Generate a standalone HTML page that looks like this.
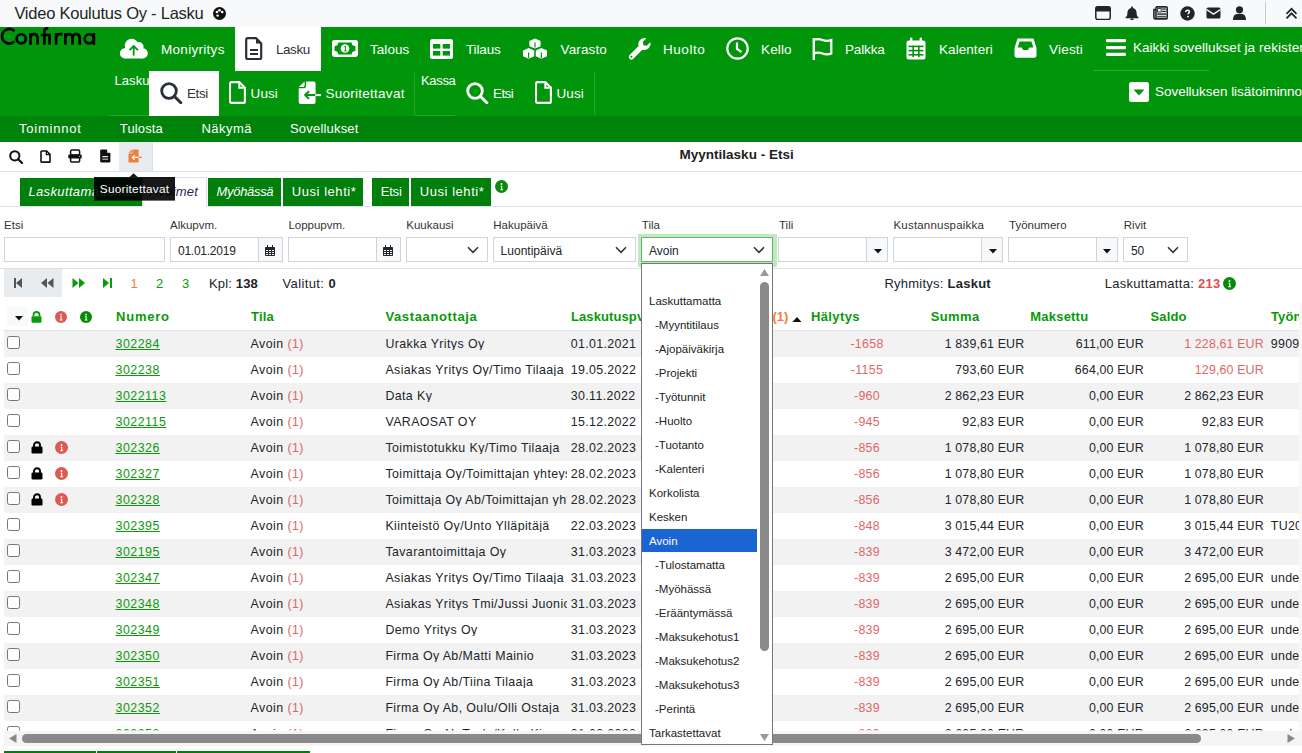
<!DOCTYPE html>
<html><head><meta charset="utf-8"><title>Lasku</title><style>
*{margin:0;padding:0;box-sizing:content-box}
html,body{width:1302px;height:753px;overflow:hidden;background:#fff}
body{position:relative;font-family:"Liberation Sans",sans-serif}
.a{position:absolute;display:block}
.t{position:absolute;white-space:nowrap;line-height:1}
</style></head><body>
<div class="a" style="left:0px;top:0px;width:1302px;height:27px;background:#f8f9fa;"></div>
<span class="t" id="t1" style="left:14.40px;top:5.43px;font-size:16.5px;color:#212529;letter-spacing:-0.236px;">Video Koulutus Oy - Lasku</span>
<svg class="a" style="left:213px;top:7px;" width="13" height="13" viewBox="0 0 13 13"><circle cx="6.5" cy="6.5" r="6.5" fill="#111"/><circle cx="4" cy="5" r="1.3" fill="#fff"/><circle cx="6.5" cy="3.2" r="1.3" fill="#fff"/><circle cx="9.2" cy="5" r="1.3" fill="#fff"/><circle cx="4.6" cy="8.6" r="1.2" fill="#fff"/></svg>
<svg class="a" style="left:1095px;top:6px;" width="16" height="14" viewBox="0 0 16 14"><rect x="0.8" y="0.8" width="14.4" height="12.6" rx="1.8" fill="none" stroke="#212529" stroke-width="1.5"/><rect x="0.8" y="0.8" width="14.4" height="4.6" rx="1" fill="#212529"/></svg>
<svg class="a" style="left:1125px;top:6px;" width="14" height="14" viewBox="0 0 14 14"><path d="M7 0.5c.7 0 1 .5 1 1v.6c2.4.5 3.6 2.5 3.6 4.8 0 2.6.9 3.6 1.9 4.6v.8H.5v-.8c1-1 1.9-2 1.9-4.6 0-2.3 1.2-4.3 3.6-4.8v-.6c0-.5.3-1 1-1z" fill="#212529"/><path d="M5.2 12.6h3.6a1.8 1.8 0 0 1-3.6 0z" fill="#212529"/></svg>
<svg class="a" style="left:1153px;top:6px;" width="15" height="14" viewBox="0 0 15 14"><path d="M3 0.9H13.2C13.8 0.9 14.2 1.3 14.2 1.9V11.9C14.2 12.5 13.8 12.9 13.2 12.9H2.2C1.4 12.9 0.9 12.4 0.9 11.6V3.6H3M3 0.9V12.4" fill="none" stroke="#212529" stroke-width="1.6"/><rect x="4.6" y="2.6" width="3.6" height="3.4" fill="#fff" stroke="#212529" stroke-width="0.9"/><rect x="9.2" y="2.4" width="3.6" height="1.3" fill="#212529"/><rect x="9.2" y="4.8" width="3.6" height="1.3" fill="#212529"/><rect x="4.2" y="7.2" width="8.8" height="2" fill="#555"/><rect x="4.2" y="10.2" width="8.8" height="1.2" fill="#212529"/></svg>
<svg class="a" style="left:1180px;top:6px;" width="15" height="15" viewBox="0 0 15 15"><circle cx="7.5" cy="7.5" r="7.2" fill="#212529"/><path d="M5.7 6C5.7 4.8 6.5 4.2 7.6 4.2 8.7 4.2 9.4 4.8 9.4 5.8 9.4 7 8 7.1 8 8.3" fill="none" stroke="#fff" stroke-width="1.5"/><circle cx="8" cy="10.6" r="0.95" fill="#fff"/></svg>
<svg class="a" style="left:1206px;top:7px;" width="15" height="12" viewBox="0 0 15 12"><rect x="0.5" y="0.5" width="14" height="11" rx="1.5" fill="#212529"/><path d="M0.5 2.5 7.5 7.2 14.5 2.5" fill="none" stroke="#fff" stroke-width="1.4"/></svg>
<svg class="a" style="left:1233px;top:6px;" width="13" height="14" viewBox="0 0 13 14"><circle cx="6.5" cy="3.8" r="3.6" fill="#212529"/><path d="M0 14c0-4 2-6 4-6h5c2 0 4 2 4 6z" fill="#212529"/></svg>
<div class="a" style="left:1265px;top:2px;width:1px;height:22px;background:#c8c8c8;"></div>
<svg class="a" style="left:1285px;top:7px;" width="13" height="12" viewBox="0 0 13 12"><path d="M1.5 6.8 6.5 1.8 11.5 6.8M1.5 11.3 6.5 6.3 11.5 11.3" fill="none" stroke="#212529" stroke-width="1.7"/></svg>
<div class="a" style="left:0px;top:27px;width:1302px;height:89px;background:#00950a;"></div>
<svg class="a" style="left:0px;top:26px;" width="100" height="20" viewBox="0 0 100 20"><g fill="none" stroke="#000" stroke-width="2.7" transform="translate(0,-26)"><path d="M14.46 31.09A7.3 7.3 0 1 0 14.46 41.41"/><circle cx="21.25" cy="38.85" r="4.6"/><path d="M30.45 44.8V33M30.45 38.5C30.45 35.2 32 34.15 34.1 34.15C36.3 34.15 37.55 35.3 37.55 38.5V44.8"/><path d="M44.3 44.8V31.6C44.3 29.2 45.5 28.45 47.3 28.45H48.3M40.8 35H50.9M49.6 35V44.8"/><path d="M56.1 44.8V33M56.1 38.6C56.1 35.3 57.6 34.15 60 34.15H62.6"/><path d="M65.45 44.8V33M65.45 38.3C65.45 35.2 66.8 34.15 69 34.15C71.2 34.15 72.6 35.2 72.6 38.3V44.8M72.6 38.3C72.6 35.2 74 34.15 76.2 34.15C78.4 34.15 79.75 35.2 79.75 38.3V44.8"/><circle cx="89.3" cy="38.85" r="4.6"/><path d="M93.85 33V44.8"/></g></svg>
<svg class="a" style="left:120px;top:38px;" width="28" height="21" viewBox="0 0 28 21"><g fill="#fff"><circle cx="5" cy="15.4" r="5.1"/><circle cx="11.6" cy="7.6" r="6.8"/><circle cx="18.6" cy="9" r="5"/><circle cx="22.7" cy="15.4" r="5.1"/><rect x="5" y="9" width="17.7" height="11.5"/></g><path d="M13.7 17.4V8.2M9.5 12.2 13.7 8 17.9 12.2" fill="none" stroke="#00950a" stroke-width="1.8"/></svg>
<span class="t" id="t2" style="left:161.00px;top:42.87px;font-size:13.5px;color:#ffffff;letter-spacing:0.293px;">Moniyritys</span>
<div class="a" style="left:235px;top:27px;width:86px;height:44px;background:#ffffff;"></div>
<svg class="a" style="left:245px;top:37px;" width="18" height="23" viewBox="0 0 18 23"><path d="M2.8 1.2h8.2l5.2 5.2v14.2c0 .9-.7 1.6-1.6 1.6H2.8c-.9 0-1.6-.7-1.6-1.6V2.8c0-.9.7-1.6 1.6-1.6z" fill="none" stroke="#2a2f3a" stroke-width="2.2"/><path d="M11 1.2V6.4h5.2z" fill="#2a2f3a"/><rect x="5" y="12" width="8" height="2" fill="#2a2f3a"/><rect x="5" y="16" width="8" height="2" fill="#2a2f3a"/></svg>
<span class="t" id="t3" style="left:276.00px;top:42.87px;font-size:13.5px;color:#333;letter-spacing:-0.458px;">Lasku</span>
<svg class="a" style="left:332px;top:40px;" width="26" height="17" viewBox="0 0 26 17"><rect x="0" y="0" width="26" height="17" rx="2.4" fill="#fff"/><path d="M6.3 2.6H19.7A3.6 3.6 0 0 0 23.4 6.1V10.9A3.6 3.6 0 0 0 19.7 14.4H6.3A3.6 3.6 0 0 0 2.6 10.9V6.1A3.6 3.6 0 0 0 6.3 2.6z" fill="#00950a"/><circle cx="13" cy="8.5" r="4.3" fill="#fff"/><path d="M12.3 6.7 13.4 6.1V10.9M12.2 10.9H14.6" fill="none" stroke="#00950a" stroke-width="1"/></svg>
<span class="t" id="t4" style="left:370.00px;top:42.87px;font-size:13.5px;color:#ffffff;letter-spacing:0.054px;">Talous</span>
<svg class="a" style="left:430px;top:39px;" width="23" height="20" viewBox="0 0 23 20"><rect x="0" y="0" width="23" height="20" rx="2.5" fill="#fff"/><rect x="3" y="5" width="7.3" height="4.6" fill="#00950a"/><rect x="12.7" y="5" width="7.3" height="4.6" fill="#00950a"/><rect x="3" y="12" width="7.3" height="4.6" fill="#00950a"/><rect x="12.7" y="12" width="7.3" height="4.6" fill="#00950a"/></svg>
<span class="t" id="t5" style="left:466.00px;top:42.87px;font-size:13.5px;color:#ffffff;letter-spacing:-0.143px;">Tilaus</span>
<svg class="a" style="left:522px;top:38px;" width="26" height="22" viewBox="0 0 26 22"><path d="M13 0.5l5.6 2.4v5.4l-5.6 2.3-5.6-2.3V2.9z" fill="#fff"/><path d="M6.6 10l5.6 2.4v5.9l-5.6 2.5L1 18.3v-5.9z" fill="#fff"/><path d="M19.4 10l5.6 2.4v5.9l-5.6 2.5-5.6-2.5v-5.9z" fill="#fff"/><path d="M13 4.5v5M6.6 14.5v5.5M19.4 14.5v5.5" stroke="#00950a" stroke-width="1.2"/></svg>
<span class="t" id="t6" style="left:560.60px;top:42.87px;font-size:13.5px;color:#ffffff;letter-spacing:0.111px;">Varasto</span>
<svg class="a" style="left:628px;top:37px;" width="24" height="23" viewBox="0 0 24 23"><path d="M22.3 5.2l-3.6 3.6-3.3-.6-.6-3.3 3.6-3.6A6.2 6.2 0 0 0 10.6 9l-9 9a2.6 2.6 0 0 0 3.7 3.7l9-9a6.2 6.2 0 0 0 8-7.5z" fill="#fff"/><circle cx="3.4" cy="19.8" r="1" fill="#00950a"/></svg>
<span class="t" id="t7" style="left:663.00px;top:42.87px;font-size:13.5px;color:#ffffff;letter-spacing:0.554px;">Huolto</span>
<svg class="a" style="left:726px;top:37px;" width="23" height="23" viewBox="0 0 23 23"><circle cx="11.5" cy="11.5" r="10.2" fill="none" stroke="#fff" stroke-width="2.2"/><path d="M11 5.5v6.5l4.5 3" fill="none" stroke="#fff" stroke-width="2.2"/></svg>
<span class="t" id="t8" style="left:761.00px;top:42.87px;font-size:13.5px;color:#ffffff;letter-spacing:0.142px;">Kello</span>
<svg class="a" style="left:812px;top:37px;" width="21" height="23" viewBox="0 0 21 23"><path d="M1.8 1v22" stroke="#fff" stroke-width="2.4"/><path d="M2 3c3-1.5 6-1 8.5 0s5 1.5 8.8 0v13.5c-3.8 1.5-6.3 1-8.8 0S5 15 2 16.5" fill="none" stroke="#fff" stroke-width="2.2"/></svg>
<span class="t" id="t9" style="left:845.00px;top:42.87px;font-size:13.5px;color:#ffffff;letter-spacing:-0.146px;">Palkka</span>
<svg class="a" style="left:906px;top:37px;" width="20" height="23" viewBox="0 0 20 23"><rect x="0.5" y="3.5" width="19" height="19" rx="2.2" fill="#fff"/><rect x="4" y="0.5" width="2.4" height="5" rx="1" fill="#fff"/><rect x="13.6" y="0.5" width="2.4" height="5" rx="1" fill="#fff"/><g fill="#00950a"><rect x="2.5" y="8.6" width="15" height="1.6"/><rect x="2.5" y="12.8" width="15" height="1.6"/><rect x="2.5" y="17" width="15" height="1.6"/><rect x="6.4" y="8.6" width="1.6" height="11.5"/><rect x="12" y="8.6" width="1.6" height="11.5"/></g></svg>
<span class="t" id="t10" style="left:939.00px;top:42.87px;font-size:13.5px;color:#ffffff;letter-spacing:0.063px;">Kalenteri</span>
<svg class="a" style="left:1014px;top:38px;" width="23" height="20" viewBox="0 0 23 20"><path d="M3.5 0.5h16l3 9.5v7.5c0 1.2-1 2.2-2.2 2.2H2.7C1.5 19.7.5 18.7.5 17.5V10z" fill="#fff"/><path d="M5.6 3.4h11.8l2 6h-4.2l-1.3 2.7H9.1L7.8 9.4H3.6z" fill="#00950a"/></svg>
<span class="t" id="t11" style="left:1049.00px;top:42.87px;font-size:13.5px;color:#ffffff;letter-spacing:0.204px;">Viesti</span>
<svg class="a" style="left:1106px;top:39px;" width="20" height="17" viewBox="0 0 20 17"><rect x="0" y="0" width="20" height="3.2" rx="1.2" fill="#fff"/><rect x="0" y="7" width="20" height="3.2" rx="1.2" fill="#fff"/><rect x="0" y="13.8" width="20" height="3.2" rx="1.2" fill="#fff"/></svg>
<span class="t" id="t12" style="left:1132.90px;top:40.57px;font-size:13.5px;color:#ffffff;letter-spacing:0.072px;">Kaikki sovellukset ja rekisterit</span>
<div class="a" style="left:1093px;top:70px;width:116px;height:1px;background:rgba(255,255,255,0.18);"></div>
<span class="t" id="t13" style="left:114.60px;top:73.80px;font-size:13px;color:#ffffff;letter-spacing:0.024px;">Lasku</span>
<div class="a" style="left:109px;top:115px;width:40px;height:1px;background:rgba(255,255,255,0.15);"></div>
<div class="a" style="left:149px;top:71px;width:70px;height:45px;background:#ffffff;"></div>
<svg class="a" style="left:160px;top:82px;" width="23" height="22" viewBox="0 0 23 22"><circle cx="9" cy="9" r="7.3" fill="none" stroke="#2a2f3a" stroke-width="2.8"/><path d="M14.3 14.3l6.5 6.5" stroke="#2a2f3a" stroke-width="3" stroke-linecap="round"/></svg>
<span class="t" id="t14" style="left:187.00px;top:86.97px;font-size:13.5px;color:#333;letter-spacing:-0.439px;">Etsi</span>
<svg class="a" style="left:229px;top:81px;" width="17" height="23" viewBox="0 0 17 23"><path d="M2.5 1.1h7.8l5.6 5.6v13.7c0 .8-.7 1.5-1.5 1.5H2.5c-.8 0-1.5-.7-1.5-1.5V2.6c0-.8.7-1.5 1.5-1.5z" fill="none" stroke="#fff" stroke-width="2.1"/><path d="M10.3 1.1v5.6h5.6" fill="none" stroke="#fff" stroke-width="2"/></svg>
<span class="t" id="t15" style="left:250.60px;top:86.97px;font-size:13.5px;color:#ffffff;letter-spacing:0.061px;">Uusi</span>
<svg class="a" style="left:298px;top:81px;" width="24" height="23" viewBox="0 0 24 23"><path d="M8 0.5H15.6C16.7 0.5 17.6 1.4 17.6 2.5V20.9C17.6 22 16.7 22.9 15.6 22.9H2.7C1.6 22.9 0.7 22 0.7 20.9V7.2H6C7.1 7.2 8 6.3 8 5.2z" fill="#fff"/><path d="M0.8 5.9 6.6 0.5V4.4C6.6 5.2 6 5.9 5.1 5.9z" fill="#fff"/><path d="M17.6 14.1H7.2M11 10.3 7.2 14.1 11 17.9" fill="none" stroke="#00950a" stroke-width="2"/><path d="M17.4 14.1H23" stroke="#fff" stroke-width="2"/></svg>
<span class="t" id="t16" style="left:325.50px;top:86.97px;font-size:13.5px;color:#ffffff;letter-spacing:0.259px;">Suoritettavat</span>
<div class="a" style="left:414px;top:71px;width:1px;height:44px;background:rgba(255,255,255,0.15);"></div>
<div class="a" style="left:415px;top:115px;width:40px;height:1px;background:rgba(255,255,255,0.15);"></div>
<span class="t" id="t17" style="left:421.00px;top:74.00px;font-size:13px;color:#ffffff;letter-spacing:-0.335px;">Kassa</span>
<svg class="a" style="left:466px;top:82px;" width="23" height="22" viewBox="0 0 23 22"><circle cx="9" cy="9" r="7.3" fill="none" stroke="#fff" stroke-width="2.8"/><path d="M14.3 14.3l6.5 6.5" stroke="#fff" stroke-width="3" stroke-linecap="round"/></svg>
<span class="t" id="t18" style="left:493.00px;top:86.97px;font-size:13.5px;color:#ffffff;letter-spacing:-0.572px;">Etsi</span>
<svg class="a" style="left:535px;top:81px;" width="18" height="23" viewBox="0 0 18 23"><path d="M2.5 1.1h7.8l5.6 5.6v13.7c0 .8-.7 1.5-1.5 1.5H2.5c-.8 0-1.5-.7-1.5-1.5V2.6c0-.8.7-1.5 1.5-1.5z" fill="none" stroke="#fff" stroke-width="2.1"/><path d="M10.3 1.1v5.6h5.6" fill="none" stroke="#fff" stroke-width="2"/></svg>
<span class="t" id="t19" style="left:556.50px;top:86.97px;font-size:13.5px;color:#ffffff;letter-spacing:0.061px;">Uusi</span>
<div class="a" style="left:594px;top:71px;width:1px;height:44px;background:rgba(255,255,255,0.15);"></div>
<svg class="a" style="left:1129px;top:82px;" width="20" height="20" viewBox="0 0 20 20"><rect x="0" y="0" width="20" height="20" rx="2.5" fill="#fff"/><path d="M4.5 7.5h11L10 13.5z" fill="#00950a"/></svg>
<span class="t" id="t20" style="left:1155.00px;top:84.57px;font-size:13.5px;color:#ffffff;letter-spacing:-0.033px;">Sovelluksen lisätoiminnot</span>
<div class="a" style="left:0px;top:116px;width:1302px;height:26px;background:#00830a;"></div>
<span class="t" id="t21" style="left:19.00px;top:122.00px;font-size:13px;color:#ffffff;letter-spacing:0.770px;">Toiminnot</span>
<span class="t" id="t22" style="left:119.80px;top:122.00px;font-size:13px;color:#ffffff;letter-spacing:0.141px;">Tulosta</span>
<span class="t" id="t23" style="left:201.50px;top:122.00px;font-size:13px;color:#ffffff;letter-spacing:0.482px;">Näkymä</span>
<span class="t" id="t24" style="left:290.00px;top:122.00px;font-size:13px;color:#ffffff;letter-spacing:0.192px;">Sovellukset</span>
<div class="a" style="left:0px;top:171px;width:1302px;height:1px;background:#dee2e6;"></div>
<svg class="a" style="left:9px;top:150px;" width="14" height="14" viewBox="0 0 14 14"><circle cx="5.8" cy="5.8" r="4.6" fill="none" stroke="#111" stroke-width="2"/><path d="M9.2 9.2l3.8 3.8" stroke="#111" stroke-width="2.2" stroke-linecap="round"/></svg>
<svg class="a" style="left:40px;top:150px;" width="11" height="13" viewBox="0 0 11 13"><path d="M1.8 1h4.8l3.4 3.4v7c0 .4-.3.7-.7.7H1.8c-.4 0-.8-.3-.8-.7V1.7c0-.4.4-.7.8-.7z" fill="none" stroke="#111" stroke-width="1.6"/><path d="M6.4 1v3.6h3.6" fill="none" stroke="#111" stroke-width="1.3"/></svg>
<svg class="a" style="left:68px;top:149px;" width="14" height="14" viewBox="0 0 14 14"><rect x="2.6" y="1.1" width="9" height="5" rx="1.3" fill="none" stroke="#111" stroke-width="1.5"/><rect x="0.3" y="5.4" width="13.4" height="4.2" rx="1" fill="#111"/><circle cx="11.6" cy="7.4" r="0.6" fill="#9c6"/><rect x="2.6" y="8.8" width="9" height="4.3" rx="1" fill="#fff" stroke="#111" stroke-width="1.5"/></svg>
<svg class="a" style="left:100px;top:149px;" width="11" height="14" viewBox="0 0 11 14"><path d="M1.3 0.6H6.6L10.4 4.4V12.3C10.4 12.9 10 13.4 9.4 13.4H1.3C0.7 13.4 0.2 12.9 0.2 12.3V1.7C0.2 1.1 0.7 0.6 1.3 0.6z" fill="#111"/><path d="M7.2 0.9V3.8H10.1z" fill="#fff"/><rect x="2.3" y="7.1" width="5.8" height="1.1" fill="#fff"/><rect x="2.3" y="9.6" width="5.8" height="1.1" fill="#ccc"/></svg>
<div class="a" style="left:119px;top:142px;width:34px;height:29px;background:#e9ecef;"></div>
<div class="a" style="left:152px;top:142px;width:1px;height:29px;background:#dcdfe3;"></div>
<svg class="a" style="left:128px;top:149px;" width="14" height="14" viewBox="0 0 14 14"><path d="M4.5 0.5H9.6C10.2 0.5 10.6 0.9 10.6 1.5V12.5C10.6 13.1 10.2 13.5 9.6 13.5H1.5C0.9 13.5 0.5 13.1 0.5 12.5V4.6H3.4C4 4.6 4.5 4.1 4.5 3.5z" fill="#ef7d3c"/><path d="M0.6 3.8 3.9 0.6V3C3.9 3.5 3.5 3.8 3 3.8z" fill="#ef7d3c"/><path d="M10.6 8.4H4.3M6.6 6.1 4.3 8.4 6.6 10.7" fill="none" stroke="#fff" stroke-width="1.3"/><path d="M10.5 8.4H13.8" stroke="#ef7d3c" stroke-width="1.3"/></svg>
<span class="t" id="t25" style="left:679.40px;top:147.97px;font-size:13.5px;color:#222;font-weight:700;letter-spacing:0.021px;">Myyntilasku - Etsi</span>
<div class="a" style="left:0px;top:206px;width:1302px;height:1px;background:#dee2e6;"></div>
<div class="a" style="left:20px;top:178px;width:122px;height:28px;background:#007f0c;"></div>
<span class="t" id="t26" style="left:28.40px;top:184.50px;font-size:13px;color:#ffffff;font-style:italic;letter-spacing:0.365px;">Laskuttamattomat</span>
<div class="a" style="left:142px;top:177px;width:63px;height:29px;background:#fff;border:1px solid #dee2e6;border-bottom:none;"></div>
<span class="t" id="t27" style="left:150.00px;top:184.50px;font-size:13px;color:#1a2a5a;font-style:italic;letter-spacing:0.178px;">Avoimet</span>
<div class="a" style="left:208px;top:178px;width:73px;height:28px;background:#007f0c;"></div>
<span class="t" id="t28" style="left:216.50px;top:184.50px;font-size:13px;color:#ffffff;font-style:italic;letter-spacing:-0.307px;">Myöhässä</span>
<div class="a" style="left:283px;top:178px;width:80px;height:28px;background:#007f0c;"></div>
<span class="t" id="t29" style="left:291.80px;top:184.50px;font-size:13px;color:#ffffff;letter-spacing:0.547px;">Uusi lehti*</span>
<div class="a" style="left:372px;top:178px;width:37px;height:28px;background:#007f0c;"></div>
<span class="t" id="t30" style="left:380.70px;top:184.50px;font-size:13px;color:#ffffff;letter-spacing:-0.191px;">Etsi</span>
<div class="a" style="left:411px;top:178px;width:80px;height:28px;background:#007f0c;"></div>
<span class="t" id="t31" style="left:419.80px;top:184.50px;font-size:13px;color:#ffffff;letter-spacing:0.547px;">Uusi lehti*</span>
<svg class="a" style="left:495px;top:179.5px;" width="13" height="13" viewBox="0 0 13 13"><circle cx="6.5" cy="6.5" r="6.5" fill="#0a8a0a"/><circle cx="6.5" cy="4" r="0.95" fill="#fff"/><path d="M5.5 5.7h1.8v3.5h0.8v1H5.2v-1h0.9V6.6h-0.6z" fill="#fff"/></svg>
<svg class="a" style="left:94px;top:172px;" width="81" height="29" viewBox="0 0 81 29"><path d="M35.5 5 39.6 1.2 43.7 5z" fill="#000" fill-opacity="0.9"/><rect x="0" y="5" width="81" height="23.6" fill="#000" fill-opacity="0.9"/></svg>
<span class="t" id="t32" style="left:99.80px;top:183.81px;font-size:11.8px;color:#fff;letter-spacing:0.247px;">Suoritettavat</span>
<span class="t" id="t33" style="left:4.00px;top:219.57px;font-size:11.5px;color:#333;letter-spacing:0.076px;">Etsi</span>
<span class="t" style="left:170.00px;top:219.57px;font-size:11.5px;color:#333;">Alkupvm.</span>
<span class="t" style="left:288.40px;top:219.57px;font-size:11.5px;color:#333;">Loppupvm.</span>
<span class="t" style="left:406.30px;top:219.57px;font-size:11.5px;color:#333;">Kuukausi</span>
<span class="t" style="left:493.30px;top:219.57px;font-size:11.5px;color:#333;">Hakupäivä</span>
<span class="t" style="left:641.80px;top:219.57px;font-size:11.5px;color:#333;">Tila</span>
<span class="t" style="left:779.00px;top:219.57px;font-size:11.5px;color:#333;">Tili</span>
<span class="t" id="t34" style="left:893.50px;top:219.57px;font-size:11.5px;color:#333;letter-spacing:0.193px;">Kustannuspaikka</span>
<span class="t" style="left:1009.00px;top:219.57px;font-size:11.5px;color:#333;">Työnumero</span>
<span class="t" style="left:1123.80px;top:219.57px;font-size:11.5px;color:#333;">Rivit</span>
<div class="a" style="left:4px;top:237px;width:159px;height:23px;border:1px solid #ced4da;background:#fff;"></div>
<div class="a" style="left:170px;top:237px;width:111px;height:23px;border:1px solid #ced4da;background:#fff;"></div>
<div class="a" style="left:258px;top:238px;width:24px;height:23px;background:#f8f9fa;"></div>
<div class="a" style="left:258px;top:238px;width:1px;height:23px;background:#ced4da;"></div>
<span class="t" id="t35" style="left:178.00px;top:245.04px;font-size:12px;color:#212529;letter-spacing:-0.251px;">01.01.2019</span>
<svg class="a" style="left:265px;top:245px;" width="10" height="11" viewBox="0 0 10 11"><rect x="0" y="2" width="10" height="9" rx="0.8" fill="#212529"/><rect x="2" y="0" width="1" height="3" fill="#212529"/><rect x="7" y="0" width="1" height="3" fill="#212529"/><rect x="1" y="5" width="2" height="1" fill="#f8f9fa"/><rect x="1" y="7" width="2" height="1" fill="#f8f9fa"/><rect x="1" y="9" width="2" height="1" fill="#f8f9fa"/><rect x="4" y="5" width="2" height="1" fill="#f8f9fa"/><rect x="4" y="7" width="2" height="1" fill="#f8f9fa"/><rect x="4" y="9" width="2" height="1" fill="#f8f9fa"/><rect x="7" y="5" width="2" height="1" fill="#f8f9fa"/><rect x="7" y="7" width="2" height="1" fill="#f8f9fa"/><rect x="7" y="9" width="2" height="1" fill="#f8f9fa"/></svg>
<div class="a" style="left:288px;top:237px;width:111px;height:23px;border:1px solid #ced4da;background:#fff;"></div>
<div class="a" style="left:376px;top:238px;width:24px;height:23px;background:#f8f9fa;"></div>
<div class="a" style="left:376px;top:238px;width:1px;height:23px;background:#ced4da;"></div>
<svg class="a" style="left:383px;top:245px;" width="10" height="11" viewBox="0 0 10 11"><rect x="0" y="2" width="10" height="9" rx="0.8" fill="#212529"/><rect x="2" y="0" width="1" height="3" fill="#212529"/><rect x="7" y="0" width="1" height="3" fill="#212529"/><rect x="1" y="5" width="2" height="1" fill="#f8f9fa"/><rect x="1" y="7" width="2" height="1" fill="#f8f9fa"/><rect x="1" y="9" width="2" height="1" fill="#f8f9fa"/><rect x="4" y="5" width="2" height="1" fill="#f8f9fa"/><rect x="4" y="7" width="2" height="1" fill="#f8f9fa"/><rect x="4" y="9" width="2" height="1" fill="#f8f9fa"/><rect x="7" y="5" width="2" height="1" fill="#f8f9fa"/><rect x="7" y="7" width="2" height="1" fill="#f8f9fa"/><rect x="7" y="9" width="2" height="1" fill="#f8f9fa"/></svg>
<div class="a" style="left:406px;top:237px;width:80px;height:23px;border:1px solid #ced4da;background:#fff;"></div>
<svg class="a" style="left:466.5px;top:246px;" width="12" height="8" viewBox="0 0 12 8"><path d="M1 1.3 6 6.3 11 1.3" fill="none" stroke="#333" stroke-width="1.6"/></svg>
<div class="a" style="left:493px;top:237px;width:141px;height:23px;border:1px solid #ced4da;background:#fff;"></div>
<span class="t" id="t36" style="left:500.60px;top:245.04px;font-size:12px;color:#212529;letter-spacing:0.011px;">Luontipäivä</span>
<svg class="a" style="left:615px;top:246px;" width="12" height="8" viewBox="0 0 12 8"><path d="M1 1.3 6 6.3 11 1.3" fill="none" stroke="#333" stroke-width="1.6"/></svg>
<div class="a" style="left:637.5px;top:233.5px;width:139px;height:33px;background:#c3e6c3;"></div>
<div class="a" style="left:641px;top:237px;width:130px;height:23px;border:1px solid #62b962;background:#fff;"></div>
<span class="t" id="t37" style="left:649.00px;top:245.04px;font-size:12px;color:#212529;letter-spacing:-0.003px;">Avoin</span>
<svg class="a" style="left:752.5px;top:246px;" width="12" height="8" viewBox="0 0 12 8"><path d="M1 1.3 6 6.3 11 1.3" fill="none" stroke="#333" stroke-width="1.6"/></svg>
<div class="a" style="left:778px;top:237px;width:108px;height:23px;border:1px solid #ced4da;background:#fff;"></div>
<div class="a" style="left:866px;top:238px;width:21px;height:23px;background:#f8f9fa;"></div>
<div class="a" style="left:866px;top:238px;width:1px;height:23px;background:#ced4da;"></div>
<svg class="a" style="left:873.5px;top:249px;" width="8" height="5" viewBox="0 0 8 5"><path d="M0 0h8L4 4.6z" fill="#111"/></svg>
<div class="a" style="left:893px;top:237px;width:108px;height:23px;border:1px solid #ced4da;background:#fff;"></div>
<div class="a" style="left:981px;top:238px;width:21px;height:23px;background:#f8f9fa;"></div>
<div class="a" style="left:981px;top:238px;width:1px;height:23px;background:#ced4da;"></div>
<svg class="a" style="left:988.5px;top:249px;" width="8" height="5" viewBox="0 0 8 5"><path d="M0 0h8L4 4.6z" fill="#111"/></svg>
<div class="a" style="left:1008px;top:237px;width:108px;height:23px;border:1px solid #ced4da;background:#fff;"></div>
<div class="a" style="left:1096px;top:238px;width:21px;height:23px;background:#f8f9fa;"></div>
<div class="a" style="left:1096px;top:238px;width:1px;height:23px;background:#ced4da;"></div>
<svg class="a" style="left:1103px;top:249px;" width="8" height="5" viewBox="0 0 8 5"><path d="M0 0h8L4 4.6z" fill="#111"/></svg>
<div class="a" style="left:1123px;top:237px;width:63px;height:23px;border:1px solid #ced4da;background:#fff;"></div>
<span class="t" id="t38" style="left:1131.00px;top:245.04px;font-size:12px;color:#212529;letter-spacing:-0.059px;">50</span>
<svg class="a" style="left:1167px;top:246px;" width="12" height="8" viewBox="0 0 12 8"><path d="M1 1.3 6 6.3 11 1.3" fill="none" stroke="#333" stroke-width="1.6"/></svg>
<div class="a" style="left:0px;top:268px;width:1302px;height:1px;background:#dee2e6;"></div>
<div class="a" style="left:4px;top:269px;width:58px;height:28px;background:#e9ecef;"></div>
<svg class="a" style="left:14px;top:278px;" width="8" height="10" viewBox="0 0 8 10"><rect x="0" y="0" width="2" height="10" fill="#555"/><path d="M8 0v10L2 5z" fill="#555"/></svg>
<svg class="a" style="left:40px;top:278px;" width="14" height="10" viewBox="0 0 14 10"><path d="M7 0v10L1 5zM13.5 0v10l-6-5z" fill="#555"/></svg>
<svg class="a" style="left:71.5px;top:278px;" width="14" height="10" viewBox="0 0 14 10"><path d="M0.5 0v10l6-5zM7 0v10l6-5z" fill="#0a9a0a"/></svg>
<svg class="a" style="left:103px;top:278px;" width="9" height="10" viewBox="0 0 9 10"><path d="M0 0v10l6-5z" fill="#0a9a0a"/><rect x="7" y="0" width="2" height="10" fill="#0a9a0a"/></svg>
<span class="t" id="t39" style="left:130.60px;top:277.20px;font-size:13px;color:#ef7d3c;letter-spacing:-1.034px;">1</span>
<span class="t" id="t40" style="left:156.00px;top:277.20px;font-size:13px;color:#0a9a0a;letter-spacing:0.566px;">2</span>
<span class="t" id="t41" style="left:182.00px;top:277.20px;font-size:13px;color:#0a9a0a;letter-spacing:0.566px;">3</span>
<span class="t" id="t42" style="left:209.00px;top:277.20px;font-size:13px;color:#212529;letter-spacing:0.154px;">Kpl: <b>138</b></span>
<span class="t" id="t43" style="left:282.50px;top:277.20px;font-size:13px;color:#212529;letter-spacing:0.386px;">Valitut: <b>0</b></span>
<span class="t" id="t44" style="left:884.40px;top:277.20px;font-size:13px;color:#212529;letter-spacing:0.248px;">Ryhmitys: <b>Laskut</b></span>
<span class="t" id="t45" style="left:1104.70px;top:277.20px;font-size:13px;color:#212529;letter-spacing:0.294px;">Laskuttamatta: <b style="color:#d9534f">213</b></span>
<svg class="a" style="left:1223px;top:276.5px;" width="13" height="13" viewBox="0 0 13 13"><circle cx="6.5" cy="6.5" r="6.5" fill="#0a8a0a"/><circle cx="6.5" cy="4" r="0.95" fill="#fff"/><path d="M5.5 5.7h1.8v3.5h0.8v1H5.2v-1h0.9V6.6h-0.6z" fill="#fff"/></svg>
<div class="a" style="left:0;top:0;width:1302px;height:753px;clip-path:inset(303px 3px 22.5px 4px);">
<div class="a" style="left:7px;top:307px;width:21px;height:19px;background:#f8f9fa;"></div>
<svg class="a" style="left:14.6px;top:315.5px;" width="8" height="5" viewBox="0 0 8 5"><path d="M0 0h8L4 4.6z" fill="#111"/></svg>
<svg class="a" style="left:31px;top:311px;" width="11" height="12" viewBox="0 0 11 12"><path d="M2.5 5.5V4a3 3 0 0 1 6 0v1.5" fill="none" stroke="#0a9a0a" stroke-width="1.8"/><rect x="0.5" y="5.2" width="10" height="6.6" rx="1.2" fill="#0a9a0a"/></svg>
<svg class="a" style="left:55px;top:311px;" width="12" height="12" viewBox="0 0 12 12"><circle cx="6" cy="6" r="6" fill="#dc5a50"/><circle cx="6" cy="3.6" r="0.9" fill="#fff"/><path d="M5 5.2h1.7v3.3h0.8v0.95H4.7V8.5h0.85V6.1H5z" fill="#fff"/></svg>
<svg class="a" style="left:80px;top:311px;" width="12" height="12" viewBox="0 0 12 12"><circle cx="6" cy="6" r="6" fill="#0a8a0a"/><circle cx="6" cy="3.6" r="0.9" fill="#fff"/><path d="M5 5.2h1.7v3.3h0.8v0.95H4.7V8.5h0.85V6.1H5z" fill="#fff"/></svg>
<span class="t" id="t46" style="left:116.00px;top:310.00px;font-size:13px;color:#079a07;font-weight:700;letter-spacing:0.775px;">Numero</span>
<span class="t" id="t47" style="left:251.00px;top:310.00px;font-size:13px;color:#079a07;font-weight:700;letter-spacing:0.209px;">Tila</span>
<span class="t" id="t48" style="left:385.40px;top:310.00px;font-size:13px;color:#079a07;font-weight:700;letter-spacing:0.631px;">Vastaanottaja</span>
<span class="t" id="t49" style="left:571.00px;top:310.00px;font-size:13px;color:#079a07;font-weight:700;letter-spacing:0.099px;">Laskutuspvm</span>
<span class="t" id="t50" style="left:772.50px;top:310.00px;font-size:13px;color:#ef7d3c;font-weight:700;letter-spacing:-0.045px;">(1)</span>
<svg class="a" style="left:792px;top:316.5px;" width="10" height="5.5" viewBox="0 0 10 5.5"><path d="M0 5.5h10L5 0z" fill="#111"/></svg>
<span class="t" id="t51" style="left:810.90px;top:310.00px;font-size:13px;color:#079a07;font-weight:700;letter-spacing:0.408px;">Hälytys</span>
<span class="t" id="t52" style="left:930.70px;top:310.00px;font-size:13px;color:#079a07;font-weight:700;letter-spacing:0.383px;">Summa</span>
<span class="t" id="t53" style="left:1030.30px;top:310.00px;font-size:13px;color:#079a07;font-weight:700;letter-spacing:0.206px;">Maksettu</span>
<span class="t" id="t54" style="left:1150.60px;top:310.00px;font-size:13px;color:#079a07;font-weight:700;letter-spacing:0.098px;">Saldo</span>
<span class="t" id="t55" style="left:1271.00px;top:310.00px;font-size:13px;color:#079a07;font-weight:700;letter-spacing:0.121px;">Työnumero</span>
<div class="a" style="left:4px;top:330px;width:1295px;height:1px;background:#dee2e6;"></div>
<div class="a" style="left:4px;top:331px;width:1295px;height:26px;background:#f2f2f2;"></div>
<div class="a" style="left:7px;top:335.5px;width:11px;height:11px;border:1px solid #767676;border-radius:2.5px;background:#fff;"></div>
<span class="t" style="left:115.50px;top:337.90px;font-size:12.4px;color:#0a9a0a;text-decoration:underline;text-underline-offset:0.6px;letter-spacing:0.5px;">302284</span>
<span class="t" style="left:250.50px;top:337.90px;font-size:12.4px;color:#212529;letter-spacing:0.45px;">Avoin <span style="color:#e06666">(1)</span></span>
<span class="t" style="left:385.40px;top:337.90px;font-size:12.4px;color:#212529;letter-spacing:0.4px;width:182px;overflow:hidden;">Urakka Yritys Oy</span>
<span class="t" style="left:570.80px;top:337.90px;font-size:12.4px;color:#212529;letter-spacing:0.35px;">01.01.2021</span>
<span class="t" style="left:817.00px;top:337.90px;font-size:12.4px;color:#e06666;letter-spacing:0.3px;width:100px;text-align:center;">-1658</span>
<span class="t" style="right:277.70px;top:337.90px;font-size:12.4px;color:#212529;letter-spacing:0.15px;">1 839,61 EUR</span>
<span class="t" style="right:158.20px;top:337.90px;font-size:12.4px;color:#212529;letter-spacing:0.15px;">611,00 EUR</span>
<span class="t" style="right:38.20px;top:337.90px;font-size:12.4px;color:#e06666;letter-spacing:0.15px;">1 228,61 EUR</span>
<span class="t" style="left:1270.80px;top:337.90px;font-size:12.4px;color:#212529;letter-spacing:0.3px;">9909</span>
<div class="a" style="left:7px;top:361.5px;width:11px;height:11px;border:1px solid #767676;border-radius:2.5px;background:#fff;"></div>
<span class="t" style="left:115.50px;top:363.90px;font-size:12.4px;color:#0a9a0a;text-decoration:underline;text-underline-offset:0.6px;letter-spacing:0.5px;">302238</span>
<span class="t" style="left:250.50px;top:363.90px;font-size:12.4px;color:#212529;letter-spacing:0.45px;">Avoin <span style="color:#e06666">(1)</span></span>
<span class="t" style="left:385.40px;top:363.90px;font-size:12.4px;color:#212529;letter-spacing:0.4px;width:182px;overflow:hidden;">Asiakas Yritys Oy/Timo Tilaaja</span>
<span class="t" style="left:570.80px;top:363.90px;font-size:12.4px;color:#212529;letter-spacing:0.35px;">19.05.2022</span>
<span class="t" style="left:817.00px;top:363.90px;font-size:12.4px;color:#e06666;letter-spacing:0.3px;width:100px;text-align:center;">-1155</span>
<span class="t" style="right:277.70px;top:363.90px;font-size:12.4px;color:#212529;letter-spacing:0.15px;">793,60 EUR</span>
<span class="t" style="right:158.20px;top:363.90px;font-size:12.4px;color:#212529;letter-spacing:0.15px;">664,00 EUR</span>
<span class="t" style="right:38.20px;top:363.90px;font-size:12.4px;color:#e06666;letter-spacing:0.15px;">129,60 EUR</span>
<div class="a" style="left:4px;top:383px;width:1295px;height:26px;background:#f2f2f2;"></div>
<div class="a" style="left:7px;top:387.5px;width:11px;height:11px;border:1px solid #767676;border-radius:2.5px;background:#fff;"></div>
<span class="t" style="left:115.50px;top:389.90px;font-size:12.4px;color:#0a9a0a;text-decoration:underline;text-underline-offset:0.6px;letter-spacing:0.5px;">3022113</span>
<span class="t" style="left:250.50px;top:389.90px;font-size:12.4px;color:#212529;letter-spacing:0.45px;">Avoin <span style="color:#e06666">(1)</span></span>
<span class="t" style="left:385.40px;top:389.90px;font-size:12.4px;color:#212529;letter-spacing:0.4px;width:182px;overflow:hidden;">Data Ky</span>
<span class="t" style="left:570.80px;top:389.90px;font-size:12.4px;color:#212529;letter-spacing:0.35px;">30.11.2022</span>
<span class="t" style="left:817.00px;top:389.90px;font-size:12.4px;color:#e06666;letter-spacing:0.3px;width:100px;text-align:center;">-960</span>
<span class="t" style="right:277.70px;top:389.90px;font-size:12.4px;color:#212529;letter-spacing:0.15px;">2 862,23 EUR</span>
<span class="t" style="right:158.20px;top:389.90px;font-size:12.4px;color:#212529;letter-spacing:0.15px;">0,00 EUR</span>
<span class="t" style="right:38.20px;top:389.90px;font-size:12.4px;color:#212529;letter-spacing:0.15px;">2 862,23 EUR</span>
<div class="a" style="left:7px;top:413.5px;width:11px;height:11px;border:1px solid #767676;border-radius:2.5px;background:#fff;"></div>
<span class="t" style="left:115.50px;top:415.90px;font-size:12.4px;color:#0a9a0a;text-decoration:underline;text-underline-offset:0.6px;letter-spacing:0.5px;">3022115</span>
<span class="t" style="left:250.50px;top:415.90px;font-size:12.4px;color:#212529;letter-spacing:0.45px;">Avoin <span style="color:#e06666">(1)</span></span>
<span class="t" style="left:385.40px;top:415.90px;font-size:12.4px;color:#212529;letter-spacing:0.4px;width:182px;overflow:hidden;">VARAOSAT OY</span>
<span class="t" style="left:570.80px;top:415.90px;font-size:12.4px;color:#212529;letter-spacing:0.35px;">15.12.2022</span>
<span class="t" style="left:817.00px;top:415.90px;font-size:12.4px;color:#e06666;letter-spacing:0.3px;width:100px;text-align:center;">-945</span>
<span class="t" style="right:277.70px;top:415.90px;font-size:12.4px;color:#212529;letter-spacing:0.15px;">92,83 EUR</span>
<span class="t" style="right:158.20px;top:415.90px;font-size:12.4px;color:#212529;letter-spacing:0.15px;">0,00 EUR</span>
<span class="t" style="right:38.20px;top:415.90px;font-size:12.4px;color:#212529;letter-spacing:0.15px;">92,83 EUR</span>
<div class="a" style="left:4px;top:435px;width:1295px;height:26px;background:#f2f2f2;"></div>
<div class="a" style="left:7px;top:439.5px;width:11px;height:11px;border:1px solid #767676;border-radius:2.5px;background:#fff;"></div>
<svg class="a" style="left:31px;top:441px;" width="12" height="13" viewBox="0 0 12 13"><path d="M3 6V4.2a3 3 0 0 1 6 0V6" fill="none" stroke="#000" stroke-width="1.9"/><rect x="0.5" y="5.5" width="11" height="7" rx="1.3" fill="#000"/></svg>
<svg class="a" style="left:55.2px;top:441px;" width="13" height="13" viewBox="0 0 13 13"><circle cx="6.5" cy="6.5" r="6.5" fill="#dc5a50"/><circle cx="6.5" cy="4" r="0.95" fill="#fff"/><path d="M5.5 5.7h1.8v3.5h0.8v1H5.2v-1h0.9V6.6h-0.6z" fill="#fff"/></svg>
<span class="t" style="left:115.50px;top:441.90px;font-size:12.4px;color:#0a9a0a;text-decoration:underline;text-underline-offset:0.6px;letter-spacing:0.5px;">302326</span>
<span class="t" style="left:250.50px;top:441.90px;font-size:12.4px;color:#212529;letter-spacing:0.45px;">Avoin <span style="color:#e06666">(1)</span></span>
<span class="t" style="left:385.40px;top:441.90px;font-size:12.4px;color:#212529;letter-spacing:0.4px;width:182px;overflow:hidden;">Toimistotukku Ky/Timo Tilaaja</span>
<span class="t" style="left:570.80px;top:441.90px;font-size:12.4px;color:#212529;letter-spacing:0.35px;">28.02.2023</span>
<span class="t" style="left:817.00px;top:441.90px;font-size:12.4px;color:#e06666;letter-spacing:0.3px;width:100px;text-align:center;">-856</span>
<span class="t" style="right:277.70px;top:441.90px;font-size:12.4px;color:#212529;letter-spacing:0.15px;">1 078,80 EUR</span>
<span class="t" style="right:158.20px;top:441.90px;font-size:12.4px;color:#212529;letter-spacing:0.15px;">0,00 EUR</span>
<span class="t" style="right:38.20px;top:441.90px;font-size:12.4px;color:#212529;letter-spacing:0.15px;">1 078,80 EUR</span>
<div class="a" style="left:7px;top:465.5px;width:11px;height:11px;border:1px solid #767676;border-radius:2.5px;background:#fff;"></div>
<svg class="a" style="left:31px;top:467px;" width="12" height="13" viewBox="0 0 12 13"><path d="M3 6V4.2a3 3 0 0 1 6 0V6" fill="none" stroke="#000" stroke-width="1.9"/><rect x="0.5" y="5.5" width="11" height="7" rx="1.3" fill="#000"/></svg>
<svg class="a" style="left:55.2px;top:467px;" width="13" height="13" viewBox="0 0 13 13"><circle cx="6.5" cy="6.5" r="6.5" fill="#dc5a50"/><circle cx="6.5" cy="4" r="0.95" fill="#fff"/><path d="M5.5 5.7h1.8v3.5h0.8v1H5.2v-1h0.9V6.6h-0.6z" fill="#fff"/></svg>
<span class="t" style="left:115.50px;top:467.90px;font-size:12.4px;color:#0a9a0a;text-decoration:underline;text-underline-offset:0.6px;letter-spacing:0.5px;">302327</span>
<span class="t" style="left:250.50px;top:467.90px;font-size:12.4px;color:#212529;letter-spacing:0.45px;">Avoin <span style="color:#e06666">(1)</span></span>
<span class="t" style="left:385.40px;top:467.90px;font-size:12.4px;color:#212529;letter-spacing:0.4px;width:182px;overflow:hidden;">Toimittaja Oy/Toimittajan yhteyshenkilö</span>
<span class="t" style="left:570.80px;top:467.90px;font-size:12.4px;color:#212529;letter-spacing:0.35px;">28.02.2023</span>
<span class="t" style="left:817.00px;top:467.90px;font-size:12.4px;color:#e06666;letter-spacing:0.3px;width:100px;text-align:center;">-856</span>
<span class="t" style="right:277.70px;top:467.90px;font-size:12.4px;color:#212529;letter-spacing:0.15px;">1 078,80 EUR</span>
<span class="t" style="right:158.20px;top:467.90px;font-size:12.4px;color:#212529;letter-spacing:0.15px;">0,00 EUR</span>
<span class="t" style="right:38.20px;top:467.90px;font-size:12.4px;color:#212529;letter-spacing:0.15px;">1 078,80 EUR</span>
<div class="a" style="left:4px;top:487px;width:1295px;height:26px;background:#f2f2f2;"></div>
<div class="a" style="left:7px;top:491.5px;width:11px;height:11px;border:1px solid #767676;border-radius:2.5px;background:#fff;"></div>
<svg class="a" style="left:31px;top:493px;" width="12" height="13" viewBox="0 0 12 13"><path d="M3 6V4.2a3 3 0 0 1 6 0V6" fill="none" stroke="#000" stroke-width="1.9"/><rect x="0.5" y="5.5" width="11" height="7" rx="1.3" fill="#000"/></svg>
<svg class="a" style="left:55.2px;top:493px;" width="13" height="13" viewBox="0 0 13 13"><circle cx="6.5" cy="6.5" r="6.5" fill="#dc5a50"/><circle cx="6.5" cy="4" r="0.95" fill="#fff"/><path d="M5.5 5.7h1.8v3.5h0.8v1H5.2v-1h0.9V6.6h-0.6z" fill="#fff"/></svg>
<span class="t" style="left:115.50px;top:493.90px;font-size:12.4px;color:#0a9a0a;text-decoration:underline;text-underline-offset:0.6px;letter-spacing:0.5px;">302328</span>
<span class="t" style="left:250.50px;top:493.90px;font-size:12.4px;color:#212529;letter-spacing:0.45px;">Avoin <span style="color:#e06666">(1)</span></span>
<span class="t" style="left:385.40px;top:493.90px;font-size:12.4px;color:#212529;letter-spacing:0.4px;width:182px;overflow:hidden;">Toimittaja Oy Ab/Toimittajan yhteyshenkilö</span>
<span class="t" style="left:570.80px;top:493.90px;font-size:12.4px;color:#212529;letter-spacing:0.35px;">28.02.2023</span>
<span class="t" style="left:817.00px;top:493.90px;font-size:12.4px;color:#e06666;letter-spacing:0.3px;width:100px;text-align:center;">-856</span>
<span class="t" style="right:277.70px;top:493.90px;font-size:12.4px;color:#212529;letter-spacing:0.15px;">1 078,80 EUR</span>
<span class="t" style="right:158.20px;top:493.90px;font-size:12.4px;color:#212529;letter-spacing:0.15px;">0,00 EUR</span>
<span class="t" style="right:38.20px;top:493.90px;font-size:12.4px;color:#212529;letter-spacing:0.15px;">1 078,80 EUR</span>
<div class="a" style="left:7px;top:517.5px;width:11px;height:11px;border:1px solid #767676;border-radius:2.5px;background:#fff;"></div>
<span class="t" style="left:115.50px;top:519.90px;font-size:12.4px;color:#0a9a0a;text-decoration:underline;text-underline-offset:0.6px;letter-spacing:0.5px;">302395</span>
<span class="t" style="left:250.50px;top:519.90px;font-size:12.4px;color:#212529;letter-spacing:0.45px;">Avoin <span style="color:#e06666">(1)</span></span>
<span class="t" style="left:385.40px;top:519.90px;font-size:12.4px;color:#212529;letter-spacing:0.4px;width:182px;overflow:hidden;">Kiinteistö Oy/Unto Ylläpitäjä</span>
<span class="t" style="left:570.80px;top:519.90px;font-size:12.4px;color:#212529;letter-spacing:0.35px;">22.03.2023</span>
<span class="t" style="left:817.00px;top:519.90px;font-size:12.4px;color:#e06666;letter-spacing:0.3px;width:100px;text-align:center;">-848</span>
<span class="t" style="right:277.70px;top:519.90px;font-size:12.4px;color:#212529;letter-spacing:0.15px;">3 015,44 EUR</span>
<span class="t" style="right:158.20px;top:519.90px;font-size:12.4px;color:#212529;letter-spacing:0.15px;">0,00 EUR</span>
<span class="t" style="right:38.20px;top:519.90px;font-size:12.4px;color:#212529;letter-spacing:0.15px;">3 015,44 EUR</span>
<span class="t" style="left:1270.80px;top:519.90px;font-size:12.4px;color:#212529;letter-spacing:0.3px;">TU2023</span>
<div class="a" style="left:4px;top:539px;width:1295px;height:26px;background:#f2f2f2;"></div>
<div class="a" style="left:7px;top:543.5px;width:11px;height:11px;border:1px solid #767676;border-radius:2.5px;background:#fff;"></div>
<span class="t" style="left:115.50px;top:545.90px;font-size:12.4px;color:#0a9a0a;text-decoration:underline;text-underline-offset:0.6px;letter-spacing:0.5px;">302195</span>
<span class="t" style="left:250.50px;top:545.90px;font-size:12.4px;color:#212529;letter-spacing:0.45px;">Avoin <span style="color:#e06666">(1)</span></span>
<span class="t" style="left:385.40px;top:545.90px;font-size:12.4px;color:#212529;letter-spacing:0.4px;width:182px;overflow:hidden;">Tavarantoimittaja Oy</span>
<span class="t" style="left:570.80px;top:545.90px;font-size:12.4px;color:#212529;letter-spacing:0.35px;">31.03.2023</span>
<span class="t" style="left:817.00px;top:545.90px;font-size:12.4px;color:#e06666;letter-spacing:0.3px;width:100px;text-align:center;">-839</span>
<span class="t" style="right:277.70px;top:545.90px;font-size:12.4px;color:#212529;letter-spacing:0.15px;">3 472,00 EUR</span>
<span class="t" style="right:158.20px;top:545.90px;font-size:12.4px;color:#212529;letter-spacing:0.15px;">0,00 EUR</span>
<span class="t" style="right:38.20px;top:545.90px;font-size:12.4px;color:#212529;letter-spacing:0.15px;">3 472,00 EUR</span>
<div class="a" style="left:7px;top:569.5px;width:11px;height:11px;border:1px solid #767676;border-radius:2.5px;background:#fff;"></div>
<span class="t" style="left:115.50px;top:571.90px;font-size:12.4px;color:#0a9a0a;text-decoration:underline;text-underline-offset:0.6px;letter-spacing:0.5px;">302347</span>
<span class="t" style="left:250.50px;top:571.90px;font-size:12.4px;color:#212529;letter-spacing:0.45px;">Avoin <span style="color:#e06666">(1)</span></span>
<span class="t" style="left:385.40px;top:571.90px;font-size:12.4px;color:#212529;letter-spacing:0.4px;width:182px;overflow:hidden;">Asiakas Yritys Oy/Timo Tilaaja</span>
<span class="t" style="left:570.80px;top:571.90px;font-size:12.4px;color:#212529;letter-spacing:0.35px;">31.03.2023</span>
<span class="t" style="left:817.00px;top:571.90px;font-size:12.4px;color:#e06666;letter-spacing:0.3px;width:100px;text-align:center;">-839</span>
<span class="t" style="right:277.70px;top:571.90px;font-size:12.4px;color:#212529;letter-spacing:0.15px;">2 695,00 EUR</span>
<span class="t" style="right:158.20px;top:571.90px;font-size:12.4px;color:#212529;letter-spacing:0.15px;">0,00 EUR</span>
<span class="t" style="right:38.20px;top:571.90px;font-size:12.4px;color:#212529;letter-spacing:0.15px;">2 695,00 EUR</span>
<span class="t" style="left:1270.80px;top:571.90px;font-size:12.4px;color:#212529;letter-spacing:0.3px;">undefined</span>
<div class="a" style="left:4px;top:591px;width:1295px;height:26px;background:#f2f2f2;"></div>
<div class="a" style="left:7px;top:595.5px;width:11px;height:11px;border:1px solid #767676;border-radius:2.5px;background:#fff;"></div>
<span class="t" style="left:115.50px;top:597.90px;font-size:12.4px;color:#0a9a0a;text-decoration:underline;text-underline-offset:0.6px;letter-spacing:0.5px;">302348</span>
<span class="t" style="left:250.50px;top:597.90px;font-size:12.4px;color:#212529;letter-spacing:0.45px;">Avoin <span style="color:#e06666">(1)</span></span>
<span class="t" style="left:385.40px;top:597.90px;font-size:12.4px;color:#212529;letter-spacing:0.4px;width:182px;overflow:hidden;">Asiakas Yritys Tmi/Jussi Juonio</span>
<span class="t" style="left:570.80px;top:597.90px;font-size:12.4px;color:#212529;letter-spacing:0.35px;">31.03.2023</span>
<span class="t" style="left:817.00px;top:597.90px;font-size:12.4px;color:#e06666;letter-spacing:0.3px;width:100px;text-align:center;">-839</span>
<span class="t" style="right:277.70px;top:597.90px;font-size:12.4px;color:#212529;letter-spacing:0.15px;">2 695,00 EUR</span>
<span class="t" style="right:158.20px;top:597.90px;font-size:12.4px;color:#212529;letter-spacing:0.15px;">0,00 EUR</span>
<span class="t" style="right:38.20px;top:597.90px;font-size:12.4px;color:#212529;letter-spacing:0.15px;">2 695,00 EUR</span>
<span class="t" style="left:1270.80px;top:597.90px;font-size:12.4px;color:#212529;letter-spacing:0.3px;">undefined</span>
<div class="a" style="left:7px;top:621.5px;width:11px;height:11px;border:1px solid #767676;border-radius:2.5px;background:#fff;"></div>
<span class="t" style="left:115.50px;top:623.90px;font-size:12.4px;color:#0a9a0a;text-decoration:underline;text-underline-offset:0.6px;letter-spacing:0.5px;">302349</span>
<span class="t" style="left:250.50px;top:623.90px;font-size:12.4px;color:#212529;letter-spacing:0.45px;">Avoin <span style="color:#e06666">(1)</span></span>
<span class="t" style="left:385.40px;top:623.90px;font-size:12.4px;color:#212529;letter-spacing:0.4px;width:182px;overflow:hidden;">Demo Yritys Oy</span>
<span class="t" style="left:570.80px;top:623.90px;font-size:12.4px;color:#212529;letter-spacing:0.35px;">31.03.2023</span>
<span class="t" style="left:817.00px;top:623.90px;font-size:12.4px;color:#e06666;letter-spacing:0.3px;width:100px;text-align:center;">-839</span>
<span class="t" style="right:277.70px;top:623.90px;font-size:12.4px;color:#212529;letter-spacing:0.15px;">2 695,00 EUR</span>
<span class="t" style="right:158.20px;top:623.90px;font-size:12.4px;color:#212529;letter-spacing:0.15px;">0,00 EUR</span>
<span class="t" style="right:38.20px;top:623.90px;font-size:12.4px;color:#212529;letter-spacing:0.15px;">2 695,00 EUR</span>
<span class="t" style="left:1270.80px;top:623.90px;font-size:12.4px;color:#212529;letter-spacing:0.3px;">undefined</span>
<div class="a" style="left:4px;top:643px;width:1295px;height:26px;background:#f2f2f2;"></div>
<div class="a" style="left:7px;top:647.5px;width:11px;height:11px;border:1px solid #767676;border-radius:2.5px;background:#fff;"></div>
<span class="t" style="left:115.50px;top:649.90px;font-size:12.4px;color:#0a9a0a;text-decoration:underline;text-underline-offset:0.6px;letter-spacing:0.5px;">302350</span>
<span class="t" style="left:250.50px;top:649.90px;font-size:12.4px;color:#212529;letter-spacing:0.45px;">Avoin <span style="color:#e06666">(1)</span></span>
<span class="t" style="left:385.40px;top:649.90px;font-size:12.4px;color:#212529;letter-spacing:0.4px;width:182px;overflow:hidden;">Firma Oy Ab/Matti Mainio</span>
<span class="t" style="left:570.80px;top:649.90px;font-size:12.4px;color:#212529;letter-spacing:0.35px;">31.03.2023</span>
<span class="t" style="left:817.00px;top:649.90px;font-size:12.4px;color:#e06666;letter-spacing:0.3px;width:100px;text-align:center;">-839</span>
<span class="t" style="right:277.70px;top:649.90px;font-size:12.4px;color:#212529;letter-spacing:0.15px;">2 695,00 EUR</span>
<span class="t" style="right:158.20px;top:649.90px;font-size:12.4px;color:#212529;letter-spacing:0.15px;">0,00 EUR</span>
<span class="t" style="right:38.20px;top:649.90px;font-size:12.4px;color:#212529;letter-spacing:0.15px;">2 695,00 EUR</span>
<span class="t" style="left:1270.80px;top:649.90px;font-size:12.4px;color:#212529;letter-spacing:0.3px;">undefined</span>
<div class="a" style="left:7px;top:673.5px;width:11px;height:11px;border:1px solid #767676;border-radius:2.5px;background:#fff;"></div>
<span class="t" style="left:115.50px;top:675.90px;font-size:12.4px;color:#0a9a0a;text-decoration:underline;text-underline-offset:0.6px;letter-spacing:0.5px;">302351</span>
<span class="t" style="left:250.50px;top:675.90px;font-size:12.4px;color:#212529;letter-spacing:0.45px;">Avoin <span style="color:#e06666">(1)</span></span>
<span class="t" style="left:385.40px;top:675.90px;font-size:12.4px;color:#212529;letter-spacing:0.4px;width:182px;overflow:hidden;">Firma Oy Ab/Tiina Tilaaja</span>
<span class="t" style="left:570.80px;top:675.90px;font-size:12.4px;color:#212529;letter-spacing:0.35px;">31.03.2023</span>
<span class="t" style="left:817.00px;top:675.90px;font-size:12.4px;color:#e06666;letter-spacing:0.3px;width:100px;text-align:center;">-839</span>
<span class="t" style="right:277.70px;top:675.90px;font-size:12.4px;color:#212529;letter-spacing:0.15px;">2 695,00 EUR</span>
<span class="t" style="right:158.20px;top:675.90px;font-size:12.4px;color:#212529;letter-spacing:0.15px;">0,00 EUR</span>
<span class="t" style="right:38.20px;top:675.90px;font-size:12.4px;color:#212529;letter-spacing:0.15px;">2 695,00 EUR</span>
<span class="t" style="left:1270.80px;top:675.90px;font-size:12.4px;color:#212529;letter-spacing:0.3px;">undefined</span>
<div class="a" style="left:4px;top:695px;width:1295px;height:26px;background:#f2f2f2;"></div>
<div class="a" style="left:7px;top:699.5px;width:11px;height:11px;border:1px solid #767676;border-radius:2.5px;background:#fff;"></div>
<span class="t" style="left:115.50px;top:701.90px;font-size:12.4px;color:#0a9a0a;text-decoration:underline;text-underline-offset:0.6px;letter-spacing:0.5px;">302352</span>
<span class="t" style="left:250.50px;top:701.90px;font-size:12.4px;color:#212529;letter-spacing:0.45px;">Avoin <span style="color:#e06666">(1)</span></span>
<span class="t" style="left:385.40px;top:701.90px;font-size:12.4px;color:#212529;letter-spacing:0.4px;width:182px;overflow:hidden;">Firma Oy Ab, Oulu/Olli Ostaja</span>
<span class="t" style="left:570.80px;top:701.90px;font-size:12.4px;color:#212529;letter-spacing:0.35px;">31.03.2023</span>
<span class="t" style="left:817.00px;top:701.90px;font-size:12.4px;color:#e06666;letter-spacing:0.3px;width:100px;text-align:center;">-839</span>
<span class="t" style="right:277.70px;top:701.90px;font-size:12.4px;color:#212529;letter-spacing:0.15px;">2 695,00 EUR</span>
<span class="t" style="right:158.20px;top:701.90px;font-size:12.4px;color:#212529;letter-spacing:0.15px;">0,00 EUR</span>
<span class="t" style="right:38.20px;top:701.90px;font-size:12.4px;color:#212529;letter-spacing:0.15px;">2 695,00 EUR</span>
<span class="t" style="left:1270.80px;top:701.90px;font-size:12.4px;color:#212529;letter-spacing:0.3px;">undefined</span>
<div class="a" style="left:7px;top:725.5px;width:11px;height:11px;border:1px solid #767676;border-radius:2.5px;background:#fff;"></div>
<span class="t" style="left:115.50px;top:727.90px;font-size:12.4px;color:#0a9a0a;text-decoration:underline;text-underline-offset:0.6px;letter-spacing:0.5px;">302353</span>
<span class="t" style="left:250.50px;top:727.90px;font-size:12.4px;color:#212529;letter-spacing:0.45px;">Avoin <span style="color:#e06666">(1)</span></span>
<span class="t" style="left:385.40px;top:727.90px;font-size:12.4px;color:#212529;letter-spacing:0.4px;width:182px;overflow:hidden;">Firma Oy Ab Tesla/Kalle Kinnunen</span>
<span class="t" style="left:570.80px;top:727.90px;font-size:12.4px;color:#212529;letter-spacing:0.35px;">31.03.2023</span>
<span class="t" style="left:817.00px;top:727.90px;font-size:12.4px;color:#e06666;letter-spacing:0.3px;width:100px;text-align:center;">-839</span>
<span class="t" style="right:277.70px;top:727.90px;font-size:12.4px;color:#212529;letter-spacing:0.15px;">2 695,00 EUR</span>
<span class="t" style="right:158.20px;top:727.90px;font-size:12.4px;color:#212529;letter-spacing:0.15px;">0,00 EUR</span>
<span class="t" style="right:38.20px;top:727.90px;font-size:12.4px;color:#212529;letter-spacing:0.15px;">2 695,00 EUR</span>
<span class="t" style="left:1270.80px;top:727.90px;font-size:12.4px;color:#212529;letter-spacing:0.3px;">undefined</span>
</div>
<div class="a" style="left:1299px;top:303px;width:3px;height:443px;background:#f8f8f8;"></div>
<div class="a" style="left:4px;top:730.5px;width:1298px;height:15.5px;background:#f5f5f5;"></div>
<svg class="a" style="left:8.5px;top:734px;" width="8" height="9" viewBox="0 0 8 9"><path d="M7.5 0v9L0 4.5z" fill="#8a8a8a"/></svg>
<div class="a" style="left:22px;top:734.2px;width:1179px;height:8.6px;border-radius:4.3px;background:#8a8a8a;"></div>
<svg class="a" style="left:1287px;top:734px;" width="8" height="9" viewBox="0 0 8 9"><path d="M0.5 0v9L8 4.5z" fill="#8a8a8a"/></svg>
<div class="a" style="left:4px;top:751px;width:92px;height:2px;background:#007f0c;"></div>
<div class="a" style="left:97px;top:751px;width:79px;height:2px;background:#007f0c;"></div>
<div class="a" style="left:177px;top:751px;width:133px;height:2px;background:#007f0c;"></div>
<div class="a" style="left:641px;top:263px;width:130px;height:479.5px;border:1px solid #767676;background:#fff;"></div>
<span class="t" style="left:649.00px;top:295.77px;font-size:11.5px;color:#222;letter-spacing:0px;">Laskuttamatta</span>
<span class="t" style="left:655.00px;top:319.77px;font-size:11.5px;color:#222;letter-spacing:0px;">-Myyntitilaus</span>
<span class="t" style="left:655.00px;top:343.77px;font-size:11.5px;color:#222;letter-spacing:0px;">-Ajopäiväkirja</span>
<span class="t" style="left:655.00px;top:367.77px;font-size:11.5px;color:#222;letter-spacing:0px;">-Projekti</span>
<span class="t" style="left:655.00px;top:391.77px;font-size:11.5px;color:#222;letter-spacing:0px;">-Työtunnit</span>
<span class="t" style="left:655.00px;top:415.77px;font-size:11.5px;color:#222;letter-spacing:0px;">-Huolto</span>
<span class="t" style="left:655.00px;top:439.77px;font-size:11.5px;color:#222;letter-spacing:0px;">-Tuotanto</span>
<span class="t" style="left:655.00px;top:463.77px;font-size:11.5px;color:#222;letter-spacing:0px;">-Kalenteri</span>
<span class="t" style="left:649.00px;top:487.77px;font-size:11.5px;color:#222;letter-spacing:0px;">Korkolista</span>
<span class="t" style="left:649.00px;top:511.77px;font-size:11.5px;color:#222;letter-spacing:0px;">Kesken</span>
<div class="a" style="left:642px;top:529px;width:115px;height:22.5px;background:#1a64d4;"></div>
<span class="t" style="left:649.00px;top:535.77px;font-size:11.5px;color:#fff;letter-spacing:0px;">Avoin</span>
<span class="t" style="left:655.00px;top:559.77px;font-size:11.5px;color:#222;letter-spacing:0px;">-Tulostamatta</span>
<span class="t" style="left:655.00px;top:583.77px;font-size:11.5px;color:#222;letter-spacing:0px;">-Myöhässä</span>
<span class="t" style="left:655.00px;top:607.77px;font-size:11.5px;color:#222;letter-spacing:0px;">-Erääntymässä</span>
<span class="t" style="left:655.00px;top:631.77px;font-size:11.5px;color:#222;letter-spacing:0px;">-Maksukehotus1</span>
<span class="t" style="left:655.00px;top:655.77px;font-size:11.5px;color:#222;letter-spacing:0px;">-Maksukehotus2</span>
<span class="t" style="left:655.00px;top:679.77px;font-size:11.5px;color:#222;letter-spacing:0px;">-Maksukehotus3</span>
<span class="t" style="left:655.00px;top:703.77px;font-size:11.5px;color:#222;letter-spacing:0px;">-Perintä</span>
<span class="t" style="left:649.00px;top:727.77px;font-size:11.5px;color:#222;letter-spacing:0px;">Tarkastettavat</span>
<svg class="a" style="left:760px;top:269px;" width="9" height="7" viewBox="0 0 9 7"><path d="M0 7h9L4.5 0z" fill="#999"/></svg>
<div class="a" style="left:760px;top:281.5px;width:9px;height:369.5px;border-radius:4.5px;background:#8a8a8a;"></div>
<svg class="a" style="left:760px;top:733.5px;" width="9" height="7" viewBox="0 0 9 7"><path d="M0 0h9L4.5 7z" fill="#999"/></svg>
</body></html>
